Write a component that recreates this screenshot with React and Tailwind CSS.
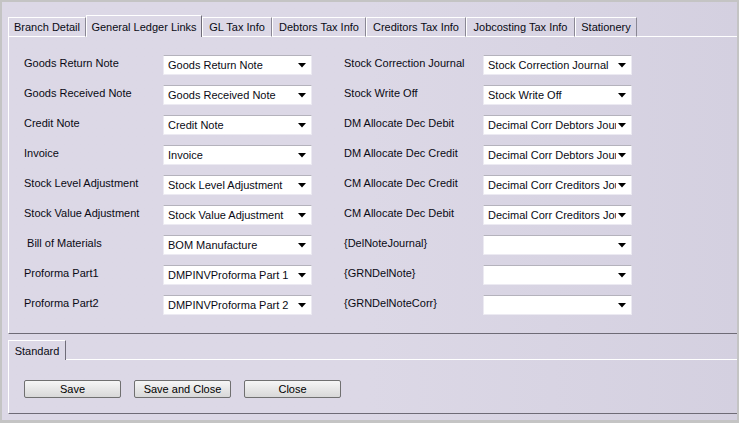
import React from "react";

const tabs = [
  { label: "Branch Detail", w: 78 },
  { label: "General Ledger Links", w: 116, active: true },
  { label: "GL Tax Info", w: 70 },
  { label: "Debtors Tax Info", w: 94 },
  { label: "Creditors Tax Info", w: 100 },
  { label: "Jobcosting Tax Info", w: 109 },
  { label: "Stationery", w: 62 },
];

const left = [
  ["Goods Return Note", "Goods Return Note"],
  ["Goods Received Note", "Goods Received Note"],
  ["Credit Note", "Credit Note"],
  ["Invoice", "Invoice"],
  ["Stock Level Adjustment", "Stock Level Adjustment"],
  ["Stock Value Adjustment", "Stock Value Adjustment"],
  ["\u00a0Bill of Materials", "BOM Manufacture"],
  ["Proforma Part1", "DMPINVProforma Part 1"],
  ["Proforma Part2", "DMPINVProforma Part 2"],
];

const right = [
  ["Stock Correction Journal", "Stock Correction Journal"],
  ["Stock Write Off", "Stock Write Off"],
  ["DM Allocate Dec Debit", "Decimal Corr Debtors Journal"],
  ["DM Allocate Dec Credit", "Decimal Corr Debtors Journal"],
  ["CM Allocate Dec Credit", "Decimal Corr Creditors Journal"],
  ["CM Allocate Dec Debit", "Decimal Corr Creditors Journal"],
  ["{DelNoteJournal}", ""],
  ["{GRNDelNote}", ""],
  ["{GRNDelNoteCorr}", ""],
];

function Select({ value }) {
  return (
    <div className="flex h-[20px] w-[149px] items-center border border-[#eceaf2] border-t-[#b4b2bc] bg-white pl-[4px] pr-[5px]">
      <span className="flex-1 overflow-hidden whitespace-nowrap pt-[1px]">{value}</span>
      <svg width="8" height="5" viewBox="0 0 8 5" className="ml-[2px] shrink-0">
        <path d="M0 0H8L4 4.5Z" fill="#000" />
      </svg>
    </div>
  );
}

function Row({ label, value }) {
  return (
    <div className="flex h-[30px] items-start">
      <div className="w-[139px] whitespace-pre pt-[2px] leading-[13px]">{label}</div>
      <Select value={value} />
    </div>
  );
}

function Button({ children }) {
  return (
    <button className="flex h-[18px] w-[97px] items-center justify-center rounded-[2px] border border-[#707070] bg-gradient-to-b from-[#f6f6f6] to-[#d8d8d8] leading-none text-black">
      {children}
    </button>
  );
}

export default function App() {
  return (
    <div
      className="h-[423px] w-[739px] bg-[#c4c4c4] pl-[2px] pr-[2px] pt-[2px] pb-[3px] text-[11px] text-[#0a0a14]"
      style={{ fontFamily: '"Liberation Sans", Arial, sans-serif' }}
    >
      <div className="flex h-full flex-col bg-gradient-to-r from-[#dcd8e6] via-[#dcd8e6] to-[#d4d0e0] pl-[6px]">
        {/* tab strip */}
        <div className="mt-[13px] flex h-[22px] items-end">
          {tabs.map((t) =>
            t.active ? (
              <div
                key={t.label}
                style={{ width: t.w }}
                className="relative z-10 flex h-[22px] items-center justify-center border-l border-t border-r border-l-white border-t-white border-r-[#6f6c78] bg-[#dcd8e6] pt-[2px]"
              >
                {t.label}
              </div>
            ) : (
              <div
                key={t.label}
                style={{ width: t.w }}
                className="flex h-[20px] items-center justify-center border-b border-l border-t border-r border-b-white border-l-white border-t-white border-r-[#8a8794]"
              >
                {t.label}
              </div>
            )
          )}
          <div className="h-[20px] flex-1 border-b border-b-white" />
        </div>

        {/* main panel */}
        <div className="flex h-[297px] border-b border-l border-b-[#6e6b76] border-l-white pl-[15px] pt-[18px]">
          <div className="w-[320px]">
            {left.map(([l, v]) => (
              <Row key={l} label={l} value={v} />
            ))}
          </div>
          <div>
            {right.map(([l, v]) => (
              <Row key={l} label={l} value={v} />
            ))}
          </div>
        </div>

        {/* bottom tabs */}
        <div className="mt-[6px] flex h-[20px] items-end">
          <div className="flex h-[20px] w-[58px] items-center justify-center border-l border-t border-r border-l-white border-t-white border-r-[#6f6c78] pt-[1px]">
            Standard
          </div>
          <div className="h-[20px] flex-1 border-b border-b-white" />
        </div>

        <div className="flex h-[54px] items-start gap-[13px] border-b border-l border-b-[#6e6b76] border-l-white pl-[15px] pt-[20px]">
          <Button>Save</Button>
          <Button>Save and Close</Button>
          <Button>Close</Button>
        </div>
      </div>
    </div>
  );
}
